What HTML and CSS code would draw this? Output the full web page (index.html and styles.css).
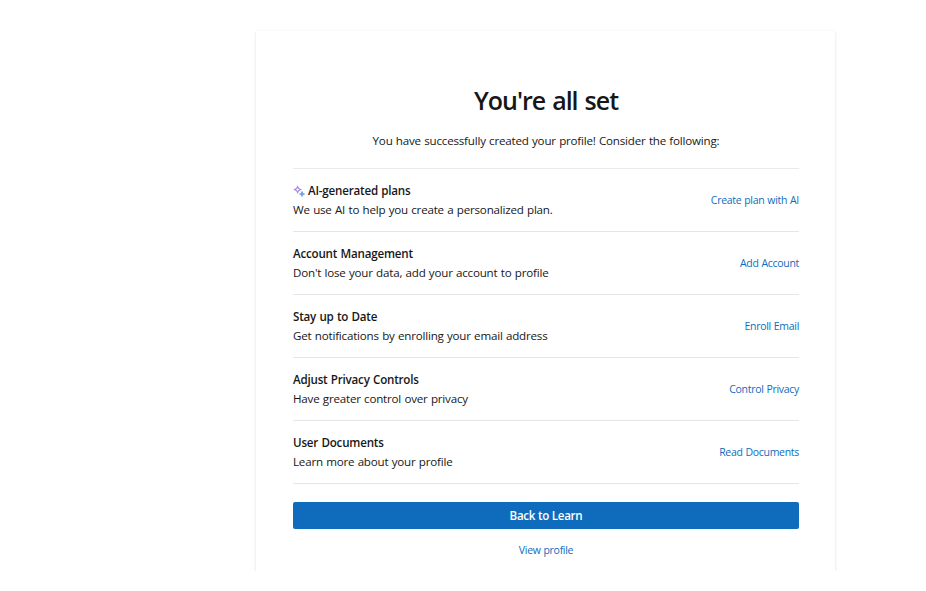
FILE: index.html
```html
<!DOCTYPE html>
<html lang="en">
  <head>
    <meta charset="UTF-8" />
    <meta name="viewport" content="width=device-width, initial-scale=1.0" />
    <title>You're all set</title>
    <link rel="stylesheet" href="styles.css">
  </head>
  <body>
    <main class="page">
      <div class="card">
        <h1>You're all set</h1>
        <p class="intro">You have successfully created your profile! Consider the following:</p>
        <ul class="options">
          <li class="option">
            <div class="info">
              <h2>
                <svg class="sparkle" viewBox="0 0 12 12" fill="none">
                  <path d="M4.6 1.6 L5.6 3.6 L7.6 4.6 L5.6 5.6 L4.6 7.6 L3.6 5.6 L1.6 4.6 L3.6 3.6Z" stroke="#a98be0" stroke-width="1.2" />
                  <path d="M9 7 L9.6 8.4 L11 9 L9.6 9.6 L9 11 L8.4 9.6 L7 9 L8.4 8.4Z" stroke="#5f8fe0" stroke-width="1.1" />
                </svg>
                <span>AI-generated plans</span>
              </h2>
              <p>We use AI to help you create a personalized plan.</p>
            </div>
            <a href="#">Create plan with AI</a>
          </li>
          <li class="option">
            <div class="info">
              <h2>Account Management</h2>
              <p>Don't lose your data, add your account to profile</p>
            </div>
            <a href="#">Add Account</a>
          </li>
          <li class="option">
            <div class="info">
              <h2>Stay up to Date</h2>
              <p>Get notifications by enrolling your email address</p>
            </div>
            <a href="#">Enroll Email</a>
          </li>
          <li class="option">
            <div class="info">
              <h2>Adjust Privacy Controls</h2>
              <p>Have greater control over privacy</p>
            </div>
            <a href="#">Control Privacy</a>
          </li>
          <li class="option">
            <div class="info">
              <h2>User Documents</h2>
              <p>Learn more about your profile</p>
            </div>
            <a href="#">Read Documents</a>
          </li>
        </ul>
        <button class="back">Back to Learn</button>
        <a class="view" href="#">View profile</a>
      </div>
    </main>
  </body>
</html>
```

FILE: styles.css
```css
* {
  box-sizing: border-box;
}

body {
  margin: 0;
  background-color: #fff;
  color: #171717;
  font-family: "Segoe UI", "Open Sans", "Noto Sans", sans-serif;
  font-size: 11.6px;
  letter-spacing: -0.2px;
  word-spacing: 0.5px;
}

h1,
h2,
p,
ul {
  margin: 0;
  padding: 0;
}

a {
  color: #0f6cbd;
  font-size: 10.5px;
  letter-spacing: -0.3px;
  text-decoration: none;
}

.page {
  height: 571px;
  padding: 31px 91px 0 256px;
  overflow: hidden;
}

.card {
  display: flex;
  flex-direction: column;
  height: 580px;
  padding: 49px 36px 0 37px;
  box-shadow: 0 1px 3px rgba(0, 0, 0, 0.13);
}

h1 {
  font-size: 25px;
  font-weight: 600;
  letter-spacing: -1px;
  line-height: 40px;
  text-align: center;
  word-spacing: 1.5px;
}

.intro {
  margin-top: 12px;
  line-height: 18px;
  text-align: center;
}

.options {
  margin-top: 18px;
  border-top: 1px solid #ebebeb;
  list-style: none;
}

.option {
  display: flex;
  align-items: center;
  justify-content: space-between;
  height: 63px;
  border-bottom: 1px solid #e6e6e6;
}

.option h2 {
  display: flex;
  align-items: center;
  font-size: 11.6px;
  font-weight: 600;
  letter-spacing: -0.2px;
  line-height: 19px;
}

.option p {
  line-height: 19px;
}

.sparkle {
  width: 12px;
  height: 12px;
  margin-right: 3px;
}

.back {
  height: 27px;
  margin-top: 18px;
  padding: 0 0 1px;
  border: none;
  border-radius: 2px;
  background-color: #0f6cbd;
  color: #fff;
  font-family: inherit;
  font-size: 11.6px;
  font-weight: 600;
  letter-spacing: -0.28px;
  cursor: pointer;
}

.view {
  align-self: center;
  margin-top: 13px;
  line-height: 16px;
}
```
